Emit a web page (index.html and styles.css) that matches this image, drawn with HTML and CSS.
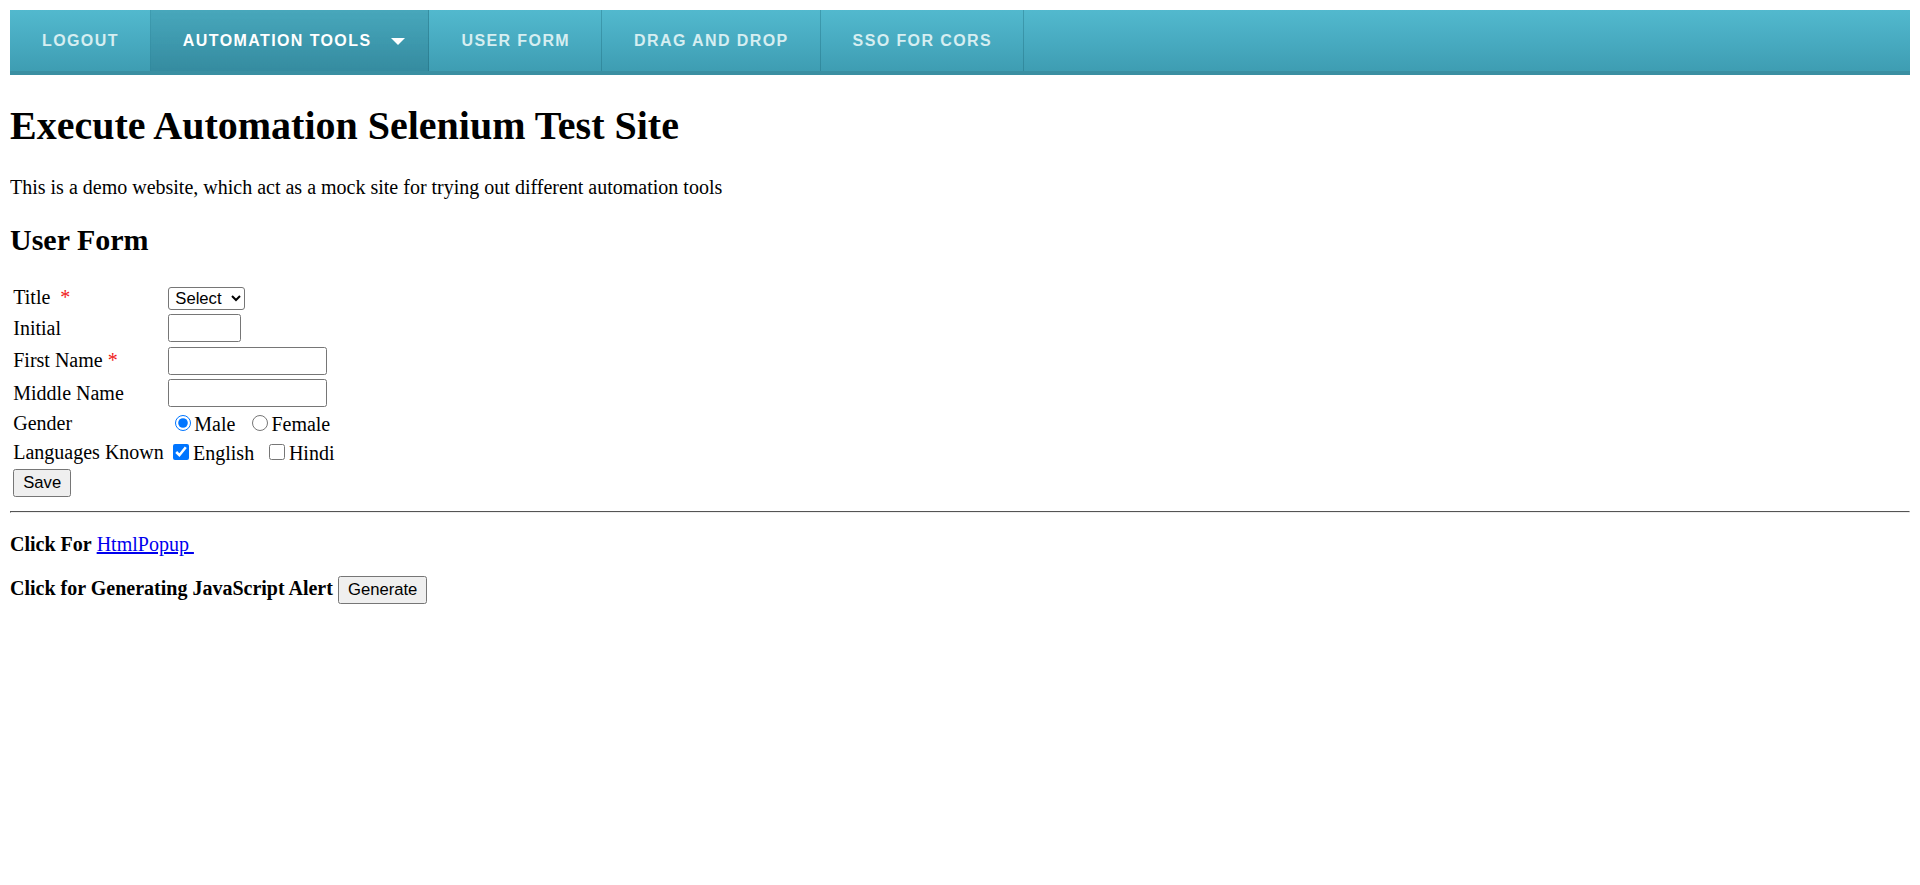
FILE: index.html
```html
<!DOCTYPE html>
<html lang="en">
<head>
<meta charset="utf-8">
<title>Execute Automation Selenium Test Site</title>
<link rel="stylesheet" href="styles.css">
</head>
<body>
<nav class="menu">
  <ul class="menu-list">
    <li class="menu-item"><a class="menu-link" href="#">Logout</a></li>
    <li class="menu-item is-active"><a class="menu-link" href="#">Automation Tools</a><span class="caret"></span></li>
    <li class="menu-item"><a class="menu-link" href="#">User Form</a></li>
    <li class="menu-item"><a class="menu-link" href="#">Drag and Drop</a></li>
    <li class="menu-item"><a class="menu-link" href="#">SSO for CORS</a></li>
  </ul>
</nav>

<h1 class="page-title">Execute Automation Selenium Test Site</h1>
<p class="intro">This is a demo website, which act as a mock site for trying out different automation tools</p>
<h2 class="section-title">User Form</h2>

<form class="user-form">
  <table class="form-table">
    <tr>
      <td>Title &nbsp;<span class="req">*</span></td>
      <td><select class="select"><option>Select</option><option>Mr.</option><option>Ms.</option></select></td>
    </tr>
    <tr>
      <td>Initial</td>
      <td><input class="field field-sm" type="text"></td>
    </tr>
    <tr>
      <td>First Name <span class="req">*</span></td>
      <td><input class="field" type="text"></td>
    </tr>
    <tr>
      <td>Middle Name</td>
      <td><input class="field" type="text"></td>
    </tr>
    <tr>
      <td>Gender</td>
      <td><input class="radio" type="radio" name="gender" checked>Male&nbsp;&nbsp;<input class="radio" type="radio" name="gender">Female</td>
    </tr>
    <tr>
      <td>Languages Known</td>
      <td><input class="check" type="checkbox" checked>English&nbsp;&nbsp;<input class="check" type="checkbox">Hindi</td>
    </tr>
    <tr>
      <td colspan="2"><button class="btn" type="button">Save</button></td>
    </tr>
  </table>
</form>

<hr class="divider">

<p class="line"><b>Click For</b> <a class="link" href="#">HtmlPopup&nbsp;</a></p>
<p class="line"><b>Click for Generating JavaScript Alert</b> <button class="btn" type="button">Generate</button></p>
</body>
</html>
```

FILE: styles.css
```css
body {
  margin: 10px;
  font-family: "Liberation Serif", "Times New Roman", serif;
  font-size: 20px;
  color: #000;
  background: #fff;
}

.menu {
  background: linear-gradient(to bottom, #52b9ce 0%, #48abc1 50%, #3e9db2 100%);
  border-bottom: 4px solid #3a8fa2;
}

.menu-list {
  display: flex;
  list-style: none;
  margin: 0;
  padding: 0;
  height: 61px;
}

.menu-item {
  display: flex;
  align-items: center;
  padding: 0 31px 0 32px;
  border-right: 1px solid rgba(20, 90, 105, 0.3);
}

.menu-link {
  font-family: "Liberation Sans", Arial, sans-serif;
  font-weight: bold;
  font-size: 16px;
  letter-spacing: 1.4px;
  text-transform: uppercase;
  text-decoration: none;
  color: #d6eef1;
}

.menu-item.is-active {
  background: linear-gradient(to bottom, rgba(10, 60, 75, 0.14), rgba(10, 60, 75, 0.18));
  padding-right: 23px;
}

.menu-item.is-active .menu-link {
  color: #fff;
}

.caret {
  margin-left: 20px;
  margin-top: 1px;
  width: 0;
  height: 0;
  border-top: 7px solid #fff;
  border-left: 7px solid transparent;
  border-right: 7px solid transparent;
}

.page-title {
  font-size: 40px;
  margin: 26.8px 0;
}

.intro {
  margin: 20px 0;
}

.section-title {
  font-size: 30px;
  margin: 24.9px 0;
}

.user-form {
  margin: 0;
}

.form-table {
  border-spacing: 2.5px;
}

.form-table td {
  padding: 1.25px;
}

.req {
  color: #f01818;
}

.select {
  font-family: Arial, "Liberation Sans", sans-serif;
  font-size: 16.67px;
  width: 77px;
  height: 23px;
  border: 1px solid #767676;
  border-radius: 3px;
  background: #fff;
  color: #000;
  padding: 0 0 0 2px;
}

.field {
  box-sizing: border-box;
  width: 159px;
  height: 28px;
  border: 1px solid #767676;
  border-radius: 2.5px;
  padding: 1px 2px;
  font-family: Arial, "Liberation Sans", sans-serif;
  font-size: 16.67px;
  margin: 0;
}

.field-sm {
  width: 73px;
}

.radio {
  width: 16px;
  height: 16px;
  margin: 3px 3.75px 0 6.25px;
}

.check {
  width: 16px;
  height: 16px;
  margin: 3.75px 3.75px 3.75px 5px;
}

.btn {
  font-family: Arial, "Liberation Sans", sans-serif;
  font-size: 16.67px;
  padding: 3px 9px;
  border: 1px solid #767676;
  border-radius: 2.5px;
  background: #efefef;
  color: #000;
  margin: 0;
}

.divider {
  margin: 10px 0;
  border: 1px inset #eee;
  border-top-color: #a8a8a8;
  border-left-color: #a8a8a8;
}

.line {
  margin: 20px 0;
}

.link {
  color: #0000ee;
}
```
